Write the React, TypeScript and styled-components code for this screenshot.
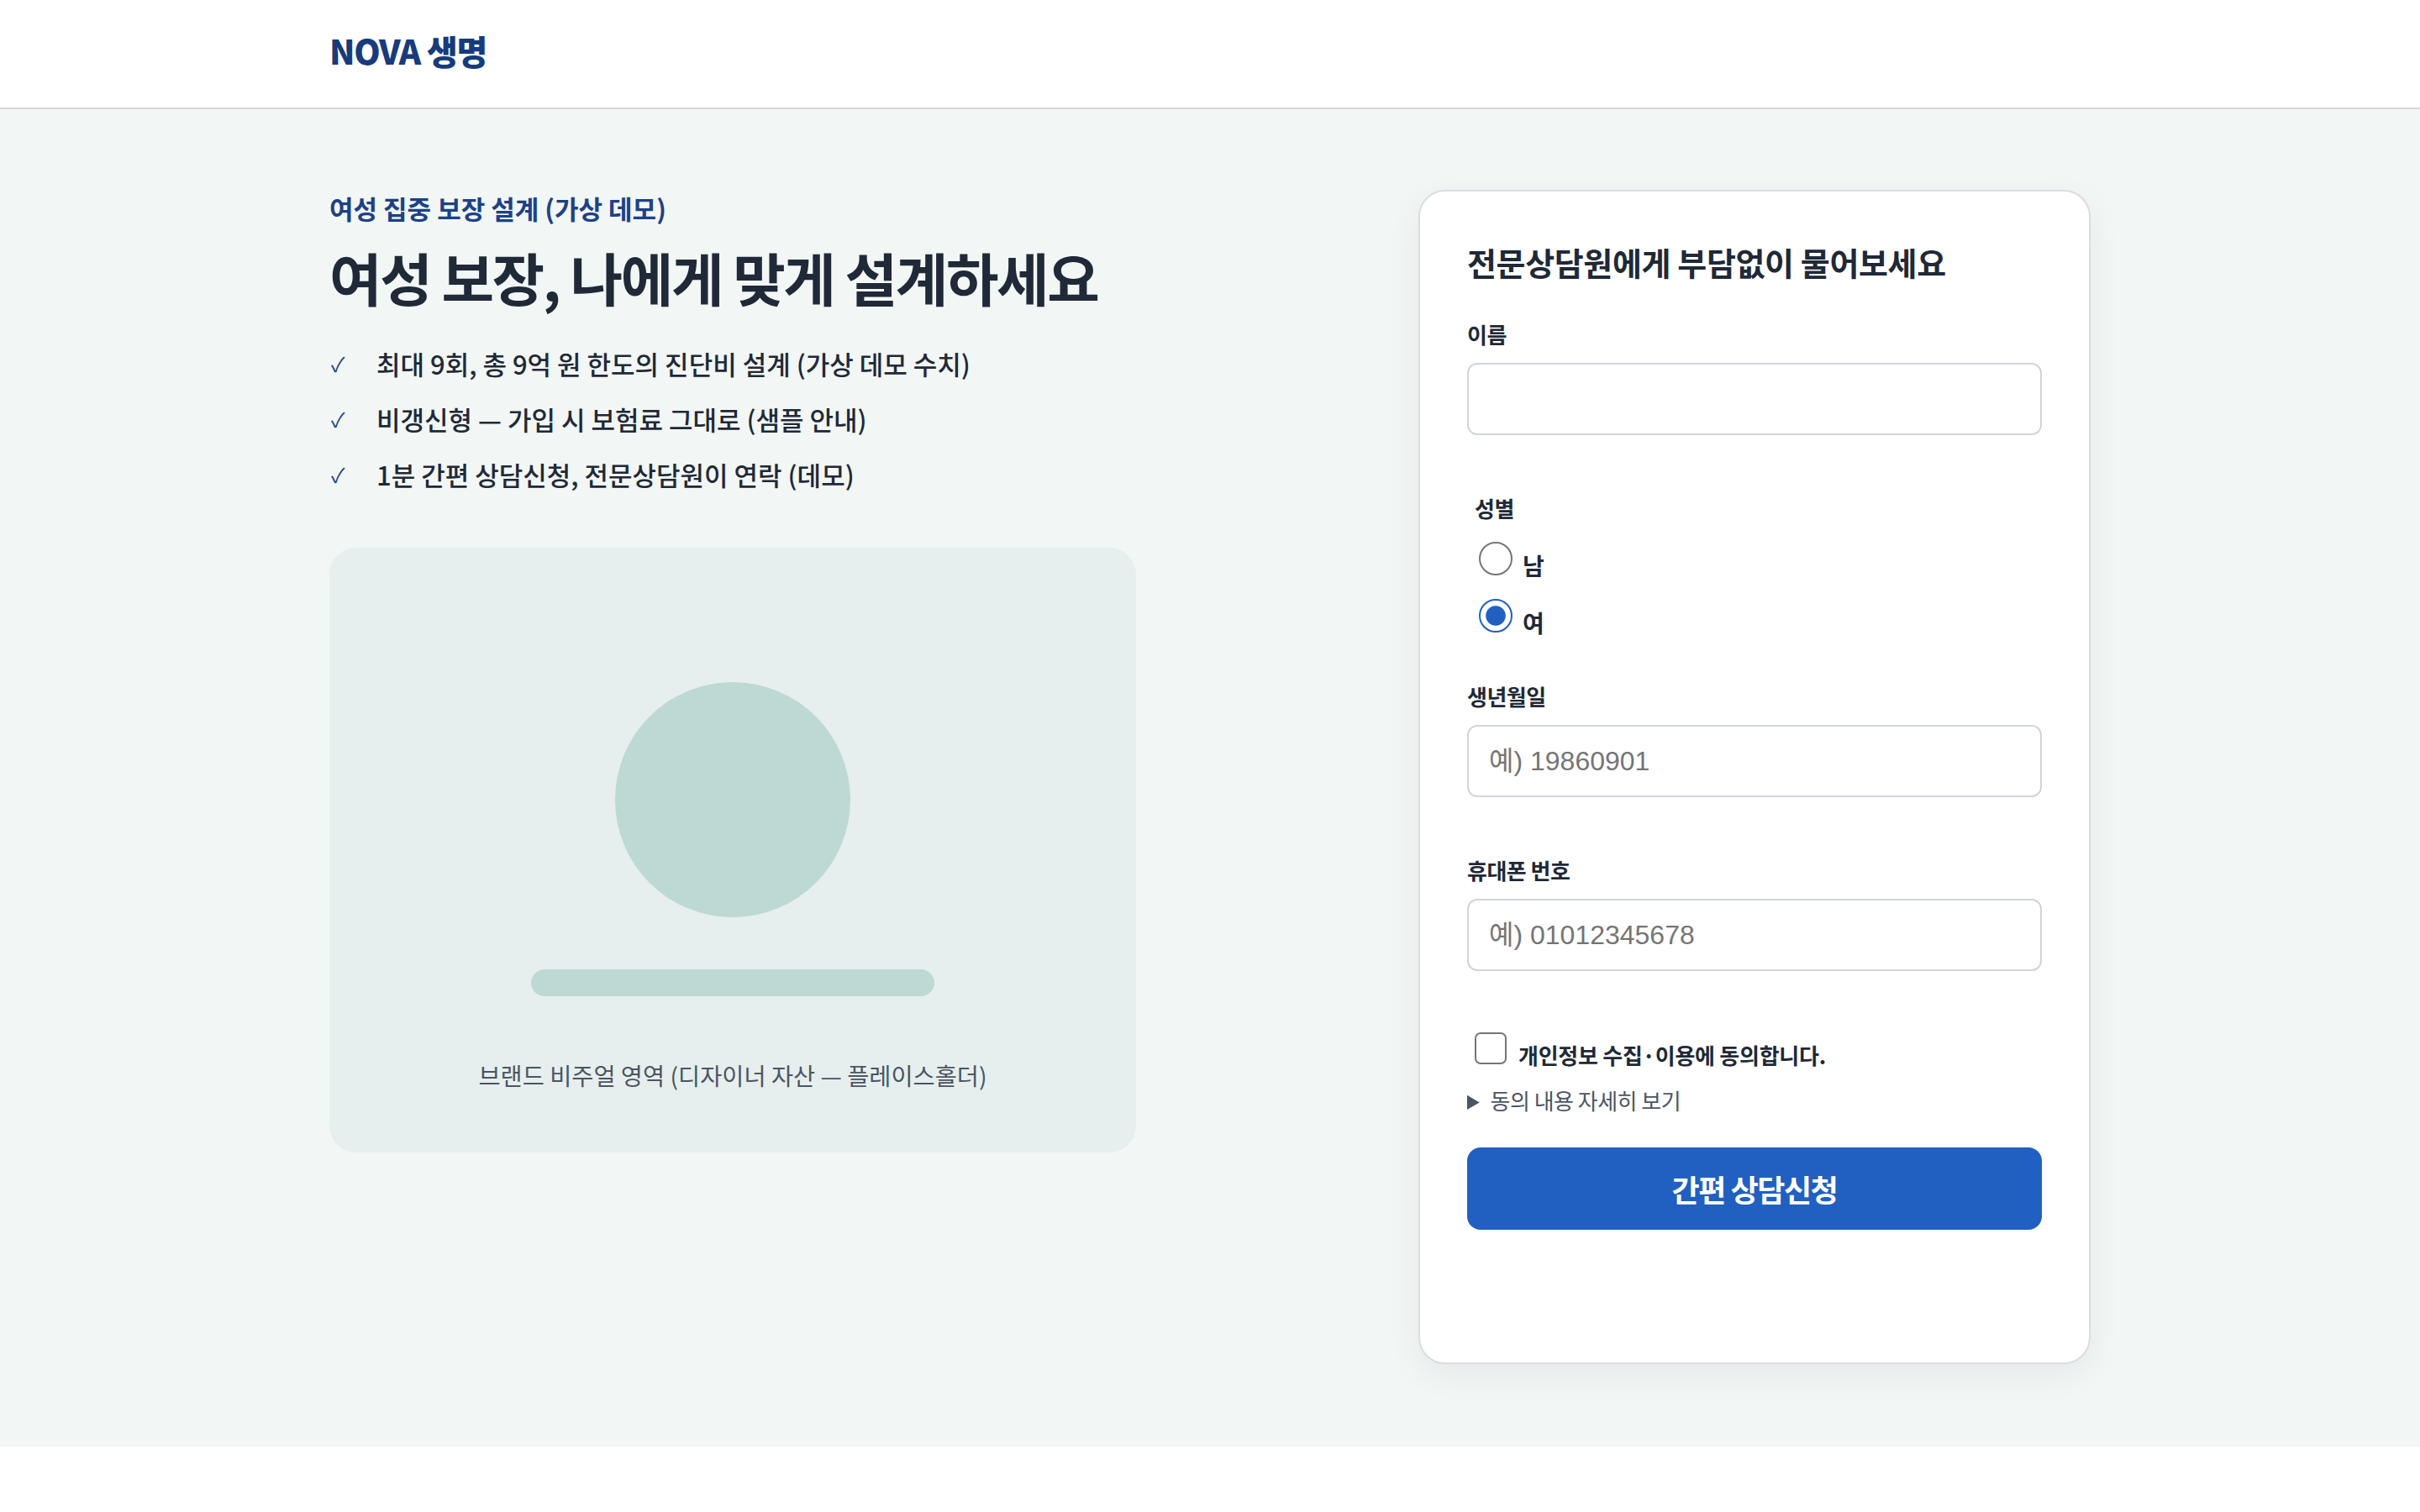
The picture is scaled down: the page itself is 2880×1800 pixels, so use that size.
import React from "react";
import styled, { createGlobalStyle } from "styled-components";

const u = (n: number) => `${n * 2}px`;

const GlobalStyle = createGlobalStyle`
  html, body {
    margin: 0;
    padding: 0;
    background: #ffffff;
  }
  body {
    font-family: "Noto Sans CJK KR", "Noto Sans", sans-serif;
    color: #1f2937;
    -webkit-font-smoothing: antialiased;
  }
  *, *::before, *::after {
    box-sizing: border-box;
  }
`;

const Header = styled.header`
  height: ${u(65)};
  background: #ffffff;
  border-bottom: ${u(1)} solid #d5d9de;
`;

const Container = styled.div`
  max-width: ${u(1080)};
  margin: 0 auto;
  padding: 0 ${u(16)};
`;

const HeaderInner = styled(Container)`
  height: 100%;
  display: flex;
  align-items: center;
  padding-bottom: ${u(4)};
`;

const Logo = styled.a`
  font-size: ${u(20)};
  line-height: ${u(28)};
  font-weight: 800;
  color: #173b7c;
  text-decoration: none;
  letter-spacing: -0.03em;
`;

const Main = styled.main`
  background: #f2f6f5;
  padding: ${u(48)} 0 ${u(49)};
`;

const Grid = styled(Container)`
  display: grid;
  grid-template-columns: minmax(0, 1fr) ${u(400)};
  column-gap: ${u(48)};
  align-items: start;
`;

const Intro = styled.section`
  display: flex;
  flex-direction: column;
`;

const Eyebrow = styled.p`
  margin: 0;
  font-size: ${u(15.5)};
  line-height: ${u(22)};
  font-weight: 700;
  color: #1d4186;
  letter-spacing: 0;
`;

const Heading = styled.h1`
  margin: ${u(8)} 0 0;
  font-size: ${u(34)};
  line-height: ${u(44)};
  font-weight: 700;
  color: #1f2937;
  letter-spacing: -0.035em;
`;

const Benefits = styled.ul`
  margin: ${u(17)} 0 0;
  padding: 0;
  list-style: none;
  display: flex;
  flex-direction: column;
  gap: ${u(8)};
`;

const Benefit = styled.li`
  display: flex;
  align-items: center;
  font-size: ${u(15.5)};
  line-height: ${u(25)};
  font-weight: 500;
  color: #1f2937;
  letter-spacing: 0;
`;

const Check = styled.span`
  flex: none;
  width: ${u(28)};
  padding-left: ${u(1)};
  font-size: ${u(12)};
  font-weight: 400;
  color: #1d4186;
`;

const Visual = styled.div`
  margin-top: ${u(31)};
  width: ${u(480)};
  height: ${u(360)};
  background: #e6efed;
  border-radius: ${u(16)};
  display: flex;
  flex-direction: column;
  align-items: center;
  padding-top: ${u(80)};
`;

const Circle = styled.div`
  width: ${u(140)};
  height: ${u(140)};
  border-radius: 50%;
  background: #bdd9d3;
`;

const Bar = styled.div`
  margin-top: ${u(31)};
  width: ${u(240)};
  height: ${u(16)};
  border-radius: ${u(999)};
  background: #bdd9d3;
`;

const Caption = styled.p`
  margin: ${u(37)} 0 0;
  font-size: ${u(14.2)};
  line-height: ${u(20)};
  color: #4b5563;
  letter-spacing: 0;
`;

const Card = styled.section`
  background: #ffffff;
  border: ${u(1)} solid #d9dde2;
  border-radius: ${u(16)};
  box-shadow: 0 ${u(6)} ${u(20)} rgba(15, 23, 42, 0.06);
  padding: ${u(28)} ${u(28)} ${u(79)};
`;

const CardTitle = styled.h2`
  margin: 0 0 ${u(19)};
  font-size: ${u(19)};
  line-height: ${u(28)};
  font-weight: 700;
  color: #1f2937;
  letter-spacing: -0.01em;
`;

const Field = styled.div`
  margin-bottom: ${u(33.5)};
`;

const FieldLabel = styled.label`
  display: block;
  margin-bottom: ${u(7)};
  font-size: ${u(13)};
  line-height: ${u(20)};
  font-weight: 700;
  color: #1f2937;
  letter-spacing: -0.02em;
`;

const TextInput = styled.input`
  display: block;
  width: 100%;
  height: ${u(43)};
  margin: 0;
  padding: 0 ${u(12)};
  border: ${u(1)} solid #d1d5db;
  border-radius: ${u(6)};
  background: #ffffff;
  font-family: "Liberation Sans", "Noto Sans CJK KR", sans-serif;
  font-size: ${u(16)};
  color: #111827;
  outline: none;

  &::placeholder {
    color: #757575;
  }
`;

const Gender = styled.div`
  margin-bottom: ${u(24)};
`;

const GroupLegend = styled.div`
  padding-left: ${u(4.5)};
  margin-bottom: ${u(10)};
  font-size: ${u(13)};
  line-height: ${u(20)};
  font-weight: 700;
  color: #1f2937;
  letter-spacing: -0.02em;
`;

const RadioLabel = styled.label`
  display: block;
  font-size: ${u(14)};
  line-height: ${u(20)};
  font-weight: 700;
  color: #1f2937;

  & + & {
    margin-top: ${u(10)};
  }
`;

const Radio = styled.input`
  appearance: none;
  width: ${u(20)};
  height: ${u(20)};
  margin: 0 ${u(6)} 0 ${u(7)};
  border: ${u(1)} solid #767676;
  border-radius: 50%;
  background: #ffffff;
  vertical-align: baseline;

  &:checked {
    border: ${u(1.4)} solid #2160c0;
    background: radial-gradient(circle, #2160c0 0 ${u(5.6)}, #ffffff ${u(6.2)});
  }
`;

const ConsentLabel = styled.label`
  display: block;
  padding-top: ${u(3)};
  font-size: ${u(13)};
  line-height: ${u(20)};
  font-weight: 700;
  color: #1f2937;
  letter-spacing: -0.01em;
`;

const Checkbox = styled.input`
  appearance: none;
  width: ${u(19)};
  height: ${u(19)};
  margin: 0 ${u(7)} 0 ${u(4.5)};
  border: ${u(1)} solid #767676;
  border-radius: ${u(3.5)};
  background: #ffffff;
  vertical-align: baseline;
`;

const Details = styled.details`
  margin-top: ${u(8)};
`;

const Summary = styled.summary`
  font-size: ${u(13)};
  line-height: ${u(18)};
  color: #4b5563;
  letter-spacing: -0.02em;
  cursor: pointer;
`;

const DetailsBody = styled.p`
  margin: ${u(6)} 0 0;
  font-size: ${u(12)};
  color: #4b5563;
`;

const SubmitButton = styled.button`
  display: block;
  width: 100%;
  height: ${u(49)};
  margin-top: ${u(19)};
  border: 0;
  border-radius: ${u(8)};
  background: #2160c0;
  color: #ffffff;
  font-family: inherit;
  font-size: ${u(18)};
  font-weight: 700;
  letter-spacing: -0.04em;
  cursor: pointer;
`;

const benefits = [
  "최대 9회, 총 9억 원 한도의 진단비 설계 (가상 데모 수치)",
  "비갱신형 — 가입 시 보험료 그대로 (샘플 안내)",
  "1분 간편 상담신청, 전문상담원이 연락 (데모)",
];

export default function App() {
  return (
    <>
      <GlobalStyle />
      <Header>
        <HeaderInner>
          <Logo href="#">NOVA 생명</Logo>
        </HeaderInner>
      </Header>
      <Main>
        <Grid>
          <Intro>
            <Eyebrow>여성 집중 보장 설계 (가상 데모)</Eyebrow>
            <Heading>여성 보장, 나에게 맞게 설계하세요</Heading>
            <Benefits>
              {benefits.map((b) => (
                <Benefit key={b}>
                  <Check>✓</Check>
                  <span>{b}</span>
                </Benefit>
              ))}
            </Benefits>
            <Visual>
              <Circle />
              <Bar />
              <Caption>브랜드 비주얼 영역 (디자이너 자산 — 플레이스홀더)</Caption>
            </Visual>
          </Intro>

          <Card>
            <CardTitle>전문상담원에게 부담없이 물어보세요</CardTitle>
            <Field>
              <FieldLabel htmlFor="name">이름</FieldLabel>
              <TextInput id="name" type="text" />
            </Field>
            <Gender role="radiogroup" aria-label="성별">
              <GroupLegend>성별</GroupLegend>
              <RadioLabel>
                <Radio type="radio" name="gender" value="m" />
                <span>남</span>
              </RadioLabel>
              <RadioLabel>
                <Radio type="radio" name="gender" value="f" defaultChecked />
                <span>여</span>
              </RadioLabel>
            </Gender>
            <Field>
              <FieldLabel htmlFor="birth">생년월일</FieldLabel>
              <TextInput id="birth" type="text" placeholder="예) 19860901" />
            </Field>
            <Field>
              <FieldLabel htmlFor="phone">휴대폰 번호</FieldLabel>
              <TextInput id="phone" type="tel" placeholder="예) 01012345678" />
            </Field>
            <ConsentLabel>
              <Checkbox type="checkbox" />
              <span>개인정보 수집·이용에 동의합니다.</span>
            </ConsentLabel>
            <Details>
              <Summary>동의 내용 자세히 보기</Summary>
              <DetailsBody>수집 항목: 이름, 성별, 생년월일, 휴대폰 번호 (데모)</DetailsBody>
            </Details>
            <SubmitButton type="button">간편 상담신청</SubmitButton>
          </Card>
        </Grid>
      </Main>
    </>
  );
}
